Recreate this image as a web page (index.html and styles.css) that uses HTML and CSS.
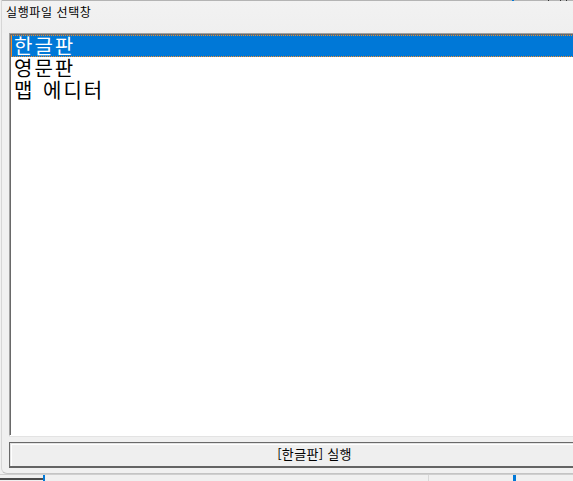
FILE: index.html
```html
<!DOCTYPE html>
<html lang="ko">
<head>
<meta charset="utf-8">
<link rel="stylesheet" href="styles.css">
</head>
<body>
<div class="screen">
  <div class="window">
    <div class="titlebar">
      <span class="title">실행파일 선택창</span>
      <div class="topmarks"><span class="m-blue"></span><span class="m-dark"></span><span class="m-dark"></span><span class="m-dark"></span></div>
    </div>
    <div class="client">
      <div class="listbox">
        <div class="item selected">한글판</div>
        <div class="item">영문판</div>
        <div class="item">맵 에디터</div>
      </div>
      <div class="button">[한글판] 실행</div>
    </div>
  </div>
  <div class="under">
    <div class="under-a"></div>
    <div class="under-b"></div>
    <div class="under-c"></div>
    <div class="under-d"></div>
  </div>
</div>
</body>
</html>
```
FILE: styles.css
```css
html, body {
  margin: 0;
  padding: 0;
  background: #f0f0f0;
  overflow: hidden;
}
.screen {
  width: 573px;
  height: 481px;
  display: flex;
  flex-direction: column;
  font-family: "Noto Sans CJK KR", "Noto Sans", sans-serif;
}
.window {
  height: 474px;
  box-sizing: border-box;
  margin-left: 1px;
  border-left: 1px solid #d6d6d6;
  border-bottom: 1px solid #c4c4c4;
  border-bottom-left-radius: 6px;
  background: #f0f0f0;
  display: flex;
  flex-direction: column;
  position: relative;
}
.titlebar {
  height: 33px;
  box-sizing: border-box;
  border-top: 1px solid #b4b4b4;
  background: linear-gradient(#f2f2f2, #efefef);
  display: flex;
  align-items: flex-start;
  position: relative;
}
.title {
  font-size: 12px;
  line-height: 14px;
  letter-spacing: 0.6px;
  padding: 4px 0 0 4px;
  color: #000;
}
.topmarks {
  position: absolute;
  top: -1px;
  left: 510px;
  display: flex;
  height: 1px;
}
.topmarks span { display: block; height: 1px; width: 1px; }
.m-blue { background: #0078d7; width: 2px !important; margin-right: 34px; }
.m-dark { background: #333; margin-right: 11px; }
.m-dark:nth-child(3) { margin-right: 5px; }
.client {
  flex: 1;
  display: flex;
  flex-direction: column;
  padding: 0 0 0 7px;
}
.listbox {
  height: 403px;
  box-sizing: border-box;
  background: #fff;
  border-top: 1px solid #a0a0a0;
  border-left: 1px solid #a0a0a0;
  border-bottom: 1px solid #fff;
  box-shadow: inset 1px 1px 0 #696969;
  padding: 1px 0 0 1px;
  position: relative;
}
.listbox::after {
  content: "";
  position: absolute;
  left: -1px;
  right: 0;
  bottom: -2px;
  height: 1px;
  background: #e3e3e3;
}
.item {
  height: 22px;
  box-sizing: border-box;
  font-size: 20px;
  line-height: 20px;
  letter-spacing: 2px;
  word-spacing: 1px;
  padding-left: 2px;
  color: #000;
  white-space: pre;
  border: 1px solid transparent;
}
.item.selected {
  background: #0078d7;
  color: #fff;
  border: 1px dashed #f28c28;
  border-image: repeating-linear-gradient(90deg, #f28c28 0 1px, #0078d7 1px 2px) 1;
}
.button {
  margin-top: 6px;
  height: 26px;
  box-sizing: border-box;
  background: #efefef;
  border-top: 1px solid #696969;
  border-left: 1px solid #696969;
  border-bottom: 2px solid #646464;
  box-shadow: inset 1px 1px 0 #e3e3e3, inset 2px 2px 0 #ffffff;
  font-size: 13px;
  line-height: 22px;
  letter-spacing: 0.3px;
  text-align: center;
  padding-left: 46px;
  color: #000;
}
.under {
  flex: 1;
  display: flex;
  border-top: 1px solid #cfcfcf;
  background: #f0f0f0;
}
.under-a {
  width: 43px;
  border-top: 2px solid #4a4a4a;
  margin-top: 3px;
}
.under-b {
  width: 2px;
  background: #0078d7;
}
.under-c {
  width: 383px;
  border-right: 1px solid #d8d8d8;
}
.under-d {
  width: 84px;
  border-right: 3px solid #0078d7;
}
```
